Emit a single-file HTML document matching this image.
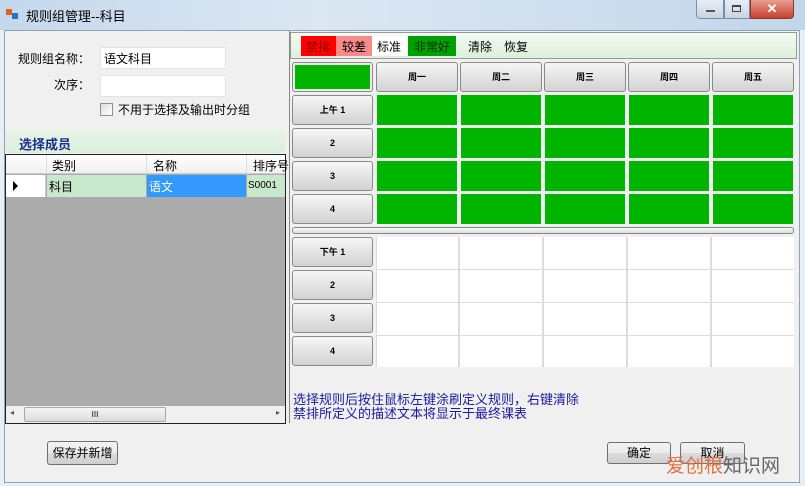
<!DOCTYPE html>
<html><head><meta charset="utf-8"><style>
*{margin:0;padding:0;box-sizing:border-box}
body{width:805px;height:486px;overflow:hidden;background:#e8eef4;font-family:"Liberation Sans","Noto Sans CJK SC",sans-serif;font-size:12px;color:#000;position:relative}
.a{position:absolute}
.btn{position:absolute;border:1px solid #707070;border-radius:3px;background:linear-gradient(#f2f2f2,#ebebeb 50%,#dcdcdc 51%,#cfcfcf);text-align:center;font-size:12px}
.hb{position:absolute;border:1px solid #8a8a8a;border-radius:3px;background:linear-gradient(#f6f6f6,#e4e4e4 50%,#d2d2d2);text-align:center;font-size:9px;font-weight:bold;line-height:29px}
.g{position:absolute;background:#00b400}
.w{position:absolute;background:#fff}
</style></head><body>
<div class="a" style="left:0;top:0;width:805px;height:30px;background:linear-gradient(90deg,#c5d8ec,#dbe7f3 40%,#c2d6ea)"></div>
<div class="a" style="left:6px;top:9px;width:6px;height:6px;background:#e06020"></div>
<div class="a" style="left:12px;top:13px;width:6px;height:6px;background:#3070c0"></div>
<div class="a" style="left:26px;top:6px;font-size:13px">规则组管理--科目</div>
<div class="a" style="left:696px;top:0;width:28px;height:19px;border:1px solid #7b8da4;border-top:0;border-radius:0 0 0 4px;background:linear-gradient(#e8eef6,#c8d4e4)"></div>
<div class="a" style="left:706px;top:10px;width:9px;height:2px;background:#555"></div>
<div class="a" style="left:724px;top:0;width:26px;height:19px;border:1px solid #7b8da4;border-top:0;background:linear-gradient(#e8eef6,#c8d4e4)"></div>
<div class="a" style="left:732px;top:5px;width:9px;height:7px;border:1px solid #444;border-top-width:2px"></div>
<div class="a" style="left:750px;top:0;width:44px;height:19px;border:1px solid #8a3a30;border-top:0;border-radius:0 0 4px 0;background:linear-gradient(#e8a090,#c84030);color:#fff;font-weight:bold;text-align:center;line-height:17px;font-size:13px">✕</div>
<div class="a" style="left:4px;top:30px;width:796px;height:453px;background:#f0f0f0;border:1px solid #8ea4bc"></div>
<div class="a" style="left:18px;top:50px">规则组名称：</div>
<div class="a" style="left:100px;top:47px;width:126px;height:22px;background:#fff;border:1px solid #e2e3ea;padding:2px 3px">语文科目</div>
<div class="a" style="left:54px;top:76px">次序：</div>
<div class="a" style="left:100px;top:75px;width:126px;height:22px;background:#fff;border:1px solid #e2e3ea"></div>
<div class="a" style="left:100px;top:103px;width:13px;height:13px;border:1px solid #8f8f8f;background:linear-gradient(135deg,#ddd,#fff)"></div>
<div class="a" style="left:118px;top:101px">不用于选择及输出时分组</div>
<div class="a" style="left:5px;top:130px;width:280px;height:23px;background:linear-gradient(#e8f4e8,#dcefdc);border-radius:3px"></div>
<div class="a" style="left:19px;top:134px;color:#1a2f8a;font-weight:bold;font-size:13px">选择成员</div>
<div class="a" style="left:5px;top:154px;width:281px;height:270px;background:#ababab;border:1px solid #222"></div>
<div class="a" style="left:6px;top:155px;width:279px;height:19px;background:linear-gradient(#fff,#f0f0f0);border-bottom:1px solid #ccc"></div>
<div class="a" style="left:52px;top:157px">类别</div>
<div class="a" style="left:153px;top:157px">名称</div>
<div class="a" style="left:253px;top:157px">排序号</div>
<div class="a" style="left:146px;top:155px;width:1px;height:19px;background:#ddd"></div>
<div class="a" style="left:246px;top:155px;width:1px;height:19px;background:#ddd"></div>
<div class="a" style="left:46px;top:155px;width:1px;height:19px;background:#ddd"></div>
<div class="a" style="left:6px;top:175px;width:40px;height:22px;background:#fff;border-right:1px solid #ccc"></div>
<div class="a" style="left:13px;top:181px;width:0;height:0;border-left:5px solid #000;border-top:5px solid transparent;border-bottom:5px solid transparent"></div>
<div class="a" style="left:47px;top:175px;width:99px;height:22px;background:#c8e8cc;padding:3px 2px">科目</div>
<div class="a" style="left:147px;top:175px;width:99px;height:22px;background:#3399ff;color:#fff;padding:3px 2px">语文</div>
<div class="a" style="left:247px;top:175px;width:38px;height:22px;background:#c8e8cc;padding:5px 1px;font-size:10px;overflow:hidden">S0001</div>
<div class="a" style="left:6px;top:406px;width:279px;height:17px;background:#f0f0f0"></div>
<div class="a" style="left:24px;top:407px;width:142px;height:15px;border:1px solid #aaa;border-radius:2px;background:linear-gradient(#f4f4f4,#dcdcdc);text-align:center;font-size:8px;line-height:13px">III</div>
<div class="a" style="left:10px;top:408px;font-size:8px;color:#555">◂</div>
<div class="a" style="left:276px;top:408px;font-size:8px;color:#555">▸</div>
<div class="a" style="left:289px;top:31px;width:509px;height:392px;border-left:1px solid #888"></div>
<div class="a" style="left:290px;top:32px;width:507px;height:27px;background:linear-gradient(#f4fbf4,#dcefdc);border:1px solid #999"></div>
<div class="a" style="left:301px;top:36px;width:35px;height:20px;background:#ff0000;color:#8a0000;padding:2px 5px">禁排</div>
<div class="a" style="left:336px;top:36px;width:36px;height:20px;background:#f88a8a;padding:2px 6px">较差</div>
<div class="a" style="left:372px;top:36px;width:36px;height:20px;background:#fff;padding:2px 5px">标准</div>
<div class="a" style="left:408px;top:36px;width:48px;height:20px;background:#00a000;color:#003000;padding:2px 6px">非常好</div>
<div class="a" style="left:468px;top:38px">清除</div>
<div class="a" style="left:504px;top:38px">恢复</div>
<div class="a" style="left:292px;top:62px;width:81px;height:30px;border:1px solid #888;border-radius:3px;background:#eee;padding:2px"><div style="width:100%;height:100%;background:#00b400"></div></div>
<div class="hb" style="left:376px;top:62px;width:82px;height:30px">周一</div>
<div class="hb" style="left:460px;top:62px;width:82px;height:30px">周二</div>
<div class="hb" style="left:544px;top:62px;width:82px;height:30px">周三</div>
<div class="hb" style="left:628px;top:62px;width:82px;height:30px">周四</div>
<div class="hb" style="left:712px;top:62px;width:82px;height:30px">周五</div>
<div class="hb" style="left:292px;top:95px;width:81px;height:30px">上午 1</div>
<div class="hb" style="left:292px;top:128px;width:81px;height:30px">2</div>
<div class="hb" style="left:292px;top:161px;width:81px;height:30px">3</div>
<div class="hb" style="left:292px;top:194px;width:81px;height:30px">4</div>
<div class="g" style="left:377px;top:95px;width:80px;height:30px"></div><div class="g" style="left:461px;top:95px;width:80px;height:30px"></div><div class="g" style="left:545px;top:95px;width:80px;height:30px"></div><div class="g" style="left:629px;top:95px;width:80px;height:30px"></div><div class="g" style="left:713px;top:95px;width:80px;height:30px"></div>
<div class="g" style="left:377px;top:128px;width:80px;height:30px"></div><div class="g" style="left:461px;top:128px;width:80px;height:30px"></div><div class="g" style="left:545px;top:128px;width:80px;height:30px"></div><div class="g" style="left:629px;top:128px;width:80px;height:30px"></div><div class="g" style="left:713px;top:128px;width:80px;height:30px"></div>
<div class="g" style="left:377px;top:161px;width:80px;height:30px"></div><div class="g" style="left:461px;top:161px;width:80px;height:30px"></div><div class="g" style="left:545px;top:161px;width:80px;height:30px"></div><div class="g" style="left:629px;top:161px;width:80px;height:30px"></div><div class="g" style="left:713px;top:161px;width:80px;height:30px"></div>
<div class="g" style="left:377px;top:194px;width:80px;height:30px"></div><div class="g" style="left:461px;top:194px;width:80px;height:30px"></div><div class="g" style="left:545px;top:194px;width:80px;height:30px"></div><div class="g" style="left:629px;top:194px;width:80px;height:30px"></div><div class="g" style="left:713px;top:194px;width:80px;height:30px"></div>
<div class="a" style="left:292px;top:227px;width:502px;height:7px;border:1px solid #888;border-radius:3px;background:linear-gradient(#fafafa,#ddd)"></div>
<div class="hb" style="left:292px;top:237px;width:81px;height:30px">下午 1</div>
<div class="hb" style="left:292px;top:270px;width:81px;height:30px">2</div>
<div class="hb" style="left:292px;top:303px;width:81px;height:30px">3</div>
<div class="hb" style="left:292px;top:336px;width:81px;height:30px">4</div>
<div class="a" style="left:376px;top:237px;width:418px;height:130px;background:#dcdcdc"></div>
<div class="w" style="left:377px;top:237px;width:81px;height:32px"></div><div class="w" style="left:460px;top:237px;width:82px;height:32px"></div><div class="w" style="left:544px;top:237px;width:82px;height:32px"></div><div class="w" style="left:628px;top:237px;width:82px;height:32px"></div><div class="w" style="left:712px;top:237px;width:82px;height:32px"></div>
<div class="w" style="left:377px;top:270px;width:81px;height:32px"></div><div class="w" style="left:460px;top:270px;width:82px;height:32px"></div><div class="w" style="left:544px;top:270px;width:82px;height:32px"></div><div class="w" style="left:628px;top:270px;width:82px;height:32px"></div><div class="w" style="left:712px;top:270px;width:82px;height:32px"></div>
<div class="w" style="left:377px;top:303px;width:81px;height:32px"></div><div class="w" style="left:460px;top:303px;width:82px;height:32px"></div><div class="w" style="left:544px;top:303px;width:82px;height:32px"></div><div class="w" style="left:628px;top:303px;width:82px;height:32px"></div><div class="w" style="left:712px;top:303px;width:82px;height:32px"></div>
<div class="w" style="left:377px;top:336px;width:81px;height:31px"></div><div class="w" style="left:460px;top:336px;width:82px;height:31px"></div><div class="w" style="left:544px;top:336px;width:82px;height:31px"></div><div class="w" style="left:628px;top:336px;width:82px;height:31px"></div><div class="w" style="left:712px;top:336px;width:82px;height:31px"></div>
<div class="a" style="left:293px;top:393px;color:#1a1aa0;font-size:13px;line-height:14px">选择规则后按住鼠标左键涂刷定义规则，右键清除<br>禁排所定义的描述文本将显示于最终课表</div>
<div class="btn" style="left:47px;top:441px;width:71px;height:24px;line-height:22px">保存并新增</div>
<div class="btn" style="left:607px;top:442px;width:64px;height:22px;line-height:20px">确定</div>
<div class="btn" style="left:680px;top:442px;width:65px;height:22px;line-height:20px">取消</div>
<div class="a" style="left:666px;top:457px;font-size:19px;color:#e07040;line-height:20px">爱创根<span style="color:#666">知识网</span></div>
</body></html>
